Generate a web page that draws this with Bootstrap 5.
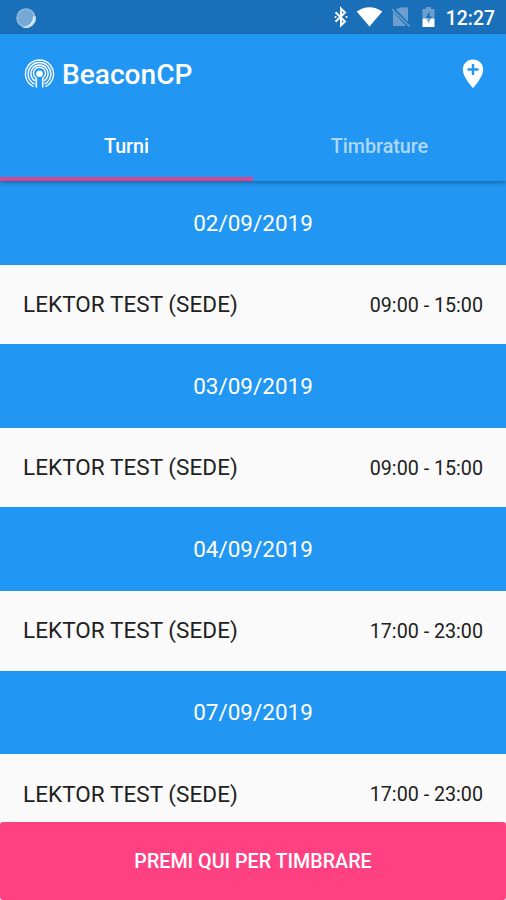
<!DOCTYPE html>
<html lang="it">
<head>
<meta charset="utf-8">
<meta name="viewport" content="width=device-width, initial-scale=1">
<title>BeaconCP</title>
<link href="https://cdn.jsdelivr.net/npm/bootstrap@5.3.0/dist/css/bootstrap.min.css" rel="stylesheet">
<style>
  body { font-family: Roboto, "Liberation Sans", sans-serif; background: #fafafa; }
  .screen { height: 900px; }
  .status-bar { height: 34px; background: #1a70b8; padding: 1px 11px 0 15px; font-size: 19.4px; font-weight: 500; }
  .clock { padding-top: 3px; }
  .top-area { height: 147px; background: #2196f3; z-index: 2; box-shadow: 0 2px 4px rgba(0, 0, 0, .3); }
  .app-bar { height: 79px; padding: 1px 18px 0 24px; }
  .app-title { font-size: 28.1px; font-weight: 500; padding-top: 3px; margin-left: 7px; }
  .app-tabs { height: 68px; }
  .app-tabs .nav-link { border-radius: 0; padding: 3px 0 0; font-size: 19.7px; font-weight: 500; color: rgba(255, 255, 255, .65); border-bottom: 4px solid transparent; }
  .app-tabs .nav-link.active { color: #fff; background: none; border-bottom-color: #d8478b; }
  .shift-date { height: 83.5px; background: #2196f3; font-size: 22.5px; padding-top: 2px; }
  .shift-row { height: 79.7px; padding: 1px 23px 0 23px; color: #212121; background: #fafafa; }
  .shift-name { font-size: 22.5px; letter-spacing: .05px; }
  .shift-time { font-size: 19.7px; padding-top: 1px; }
  .stamp-btn { height: 78px; background: #ff4081; color: #fff; border: 0; border-radius: 3px; font-size: 19.7px; font-weight: 500; padding-top: 8px; z-index: 2; }
  .stamp-btn:hover { background: #ff4081; color: #fff; }
</style>
</head>
<body>
<div class="screen d-flex flex-column overflow-hidden">
  <div class="status-bar d-flex align-items-center justify-content-between text-white flex-shrink-0">
    <svg width="22" height="22" viewBox="0 0 22 22"><circle cx="11" cy="11" r="9.700" fill="#77a9d5"/><path d="M20.500 9A9.700 9.700 0 0 1 7 20Q17.500 19.500 18.500 9z" fill="#e8f3ff"/><circle cx="11" cy="11" r="9" fill="none" stroke="#a7caea" stroke-opacity=".7" stroke-width="1.200"/></svg>
    <div class="d-flex align-items-center">
      <svg width="14" height="22" viewBox="0 0 14 22" fill="none" stroke="#fff" stroke-width="2"><path d="M1.500 6.200 11 15.500 7 19.300V2.700L11 6.500 1.500 15.800"/><path d="M1.500 11h.1M12.500 11h.1" stroke-linecap="round"/></svg>
      <svg class="ms-2" width="27" height="22" viewBox="0 0 27 22"><path d="M.7 5.500Q13.500-3 26.300 5.500L13.500 20.500z" fill="#fff"/></svg>
      <svg class="ms-2" width="20" height="22" viewBox="0 0 20 22"><path d="M9 1.500h8v14.200L4.800 3.500zM2 5.800 15 20H2z" fill="#6c9fcd"/><path d="M.8 3 18.800 20.500" stroke="#6c9fcd" stroke-width="1.700"/></svg>
      <svg class="mx-2" width="19" height="22" viewBox="0 0 19 22"><path d="M7 3V1h5v2h3.500v9.500h-12V3z" fill="#6c9fcd"/><path d="M10.500 5 6.500 12.500h3V13h2l1.500-2.500h-2.500z" fill="#1a70b8"/><path d="M3.500 12.500h12V21h-12z" fill="#fff"/><path d="M9 12.500h3l-3 5v-3H7.500z" fill="#6c9fcd"/></svg>
      <span class="clock">12:27</span>
    </div>
  </div>
  <header class="top-area position-relative text-white flex-shrink-0">
    <div class="app-bar d-flex align-items-center justify-content-between">
      <div class="d-flex align-items-center">
        <svg width="31" height="32" viewBox="0 0 31 32" fill="none" stroke="#fff" stroke-width="1.400">
          <path d="M9.500 28.600A14 14 0 1 1 21.500 28.600M10.500 26A11.300 11.300 0 1 1 20.500 26M11 22.900A8.600 8.600 0 1 1 20 22.900M11.800 19.900A6 6 0 1 1 19.200 19.900"/>
          <circle cx="15.500" cy="15.700" r="3.300" fill="#fff" stroke="none"/><path d="M12.300 19.500v10M18.700 19.500v10" stroke-width="1.600"/>
        </svg>
        <span class="app-title">BeaconCP</span>
      </div>
      <svg width="30" height="34" viewBox="0 0 30 34"><path d="M15 2.500C9 2.500 4.800 7 4.800 12.500 4.800 20.500 15 31 15 31S25.200 20.500 25.200 12.500C25.200 7 21 2.500 15 2.500z" fill="#fff"/><path d="M15 7v11M9.500 12.500h11" stroke="#2196f3" stroke-width="2.400"/></svg>
    </div>
    <nav class="app-tabs nav nav-fill">
      <a class="nav-link active d-flex align-items-center justify-content-center w-50" href="#">Turni</a>
      <a class="nav-link d-flex align-items-center justify-content-center w-50" href="#">Timbrature</a>
    </nav>
  </header>
  <main class="flex-grow-1 overflow-hidden">
    <div class="shift-date d-flex align-items-center justify-content-center text-white">02/09/2019</div>
    <div class="shift-row d-flex align-items-center justify-content-between"><span class="shift-name">LEKTOR TEST (SEDE)</span><span class="shift-time">09:00 - 15:00</span></div>
    <div class="shift-date d-flex align-items-center justify-content-center text-white">03/09/2019</div>
    <div class="shift-row d-flex align-items-center justify-content-between"><span class="shift-name">LEKTOR TEST (SEDE)</span><span class="shift-time">09:00 - 15:00</span></div>
    <div class="shift-date d-flex align-items-center justify-content-center text-white">04/09/2019</div>
    <div class="shift-row d-flex align-items-center justify-content-between"><span class="shift-name">LEKTOR TEST (SEDE)</span><span class="shift-time">17:00 - 23:00</span></div>
    <div class="shift-date d-flex align-items-center justify-content-center text-white">07/09/2019</div>
    <div class="shift-row d-flex align-items-center justify-content-between"><span class="shift-name">LEKTOR TEST (SEDE)</span><span class="shift-time">17:00 - 23:00</span></div>
  </main>
  <button type="button" class="stamp-btn btn w-100 flex-shrink-0">PREMI QUI PER TIMBRARE</button>
</div>
<script src="https://cdn.jsdelivr.net/npm/bootstrap@5.3.0/dist/js/bootstrap.bundle.min.js"></script>
</body>
</html>
